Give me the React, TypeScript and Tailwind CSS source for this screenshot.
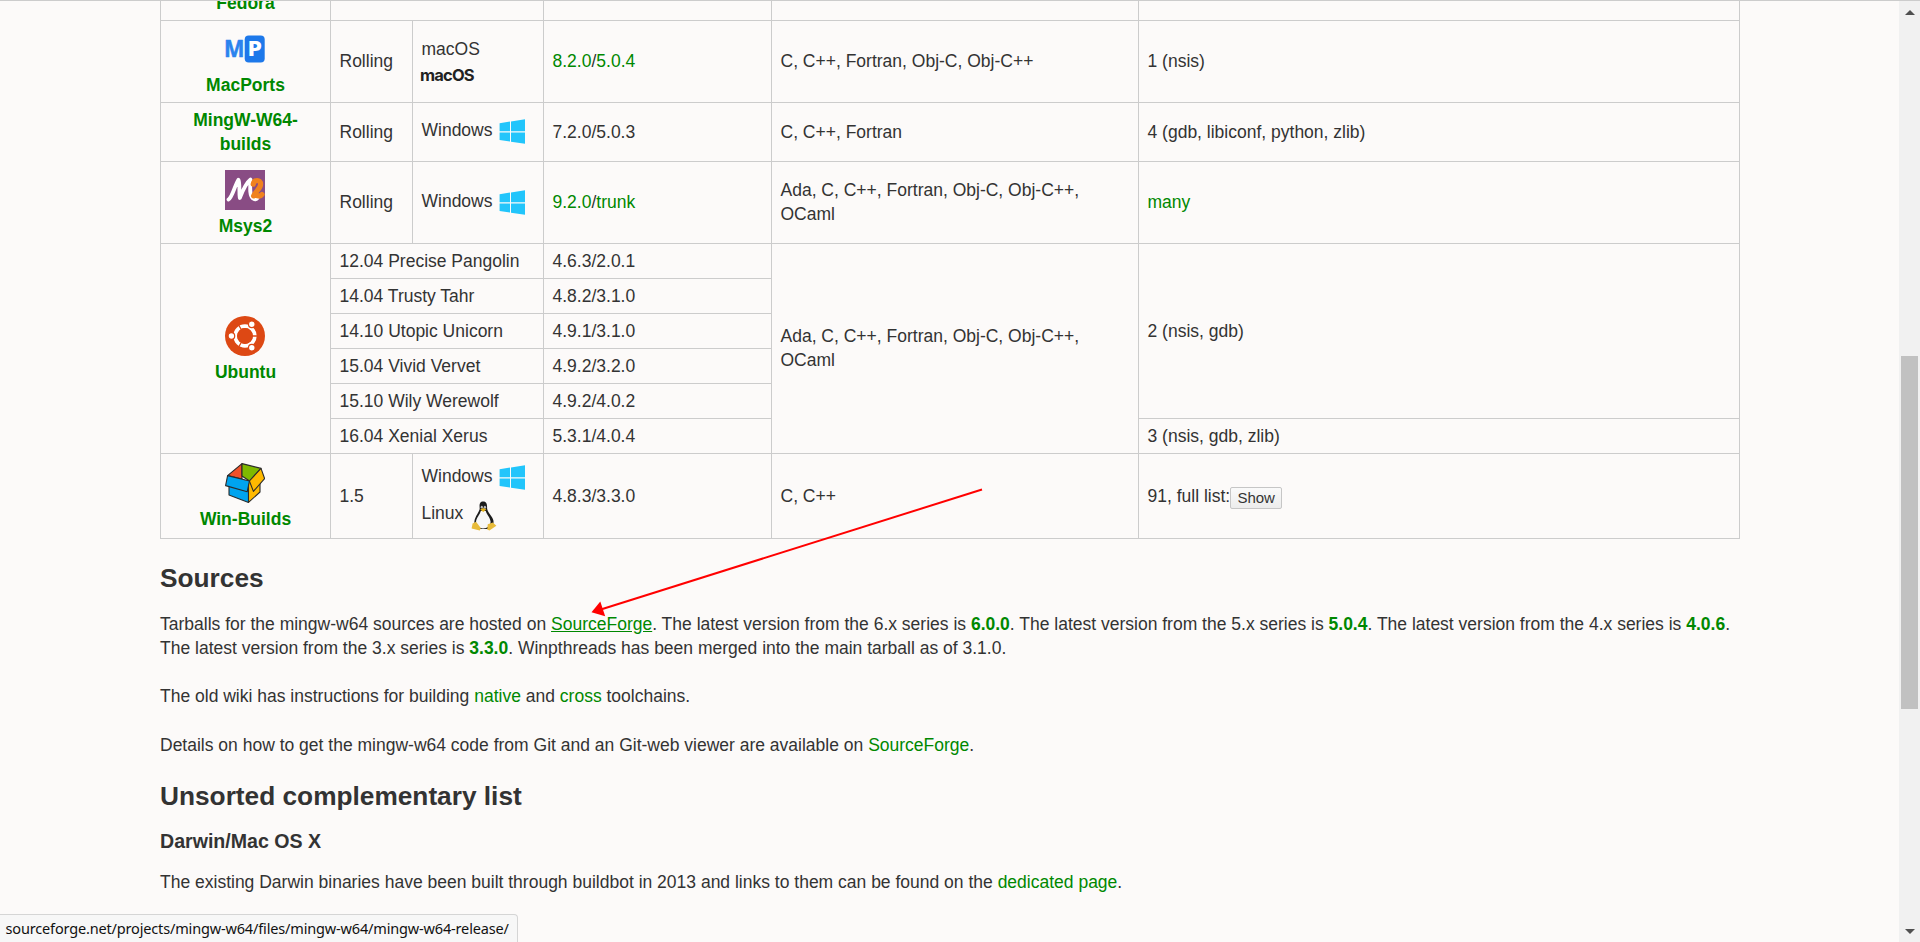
import type { ReactNode } from "react";

const cell = "flex flex-col justify-center border-r border-b border-[#cccccc] pb-px pl-[8.5px]";

function Cell({ className = "", children }: { className?: string; children?: ReactNode }) {
  return <div className={`${cell} ${className}`}>{children}</div>;
}

function NameCell({ className = "", icon, children }: { className?: string; icon?: ReactNode; children: ReactNode }) {
  return (
    <div className={`flex flex-col items-center justify-center border-r border-b border-[#cccccc] text-center font-bold ${className}`}>
      {icon && <div className="mt-[3px] mr-[2px] mb-1 h-10 w-10">{icon}</div>}
      <G>{children}</G>
    </div>
  );
}

function G({ className = "", children }: { className?: string; children: ReactNode }) {
  return <a className={`text-[#008800] ${className}`}>{children}</a>;
}

function MacPortsLogo() {
  return (
    <svg width="40" height="40" viewBox="0 0 40 40" className="block">
      <rect x="19.7" y="6.4" width="20" height="27" rx="4" fill="#1d78ea" />
      <text x="-1" y="28.2" fontFamily="Noto Sans, sans-serif" fontWeight="700" fontSize="22.5" textLength="20.5" lengthAdjust="spacingAndGlyphs" fill="#2b83ee" stroke="#2b83ee" strokeWidth="0.5">M</text>
      <text x="22.6" y="27.4" fontFamily="Noto Sans, sans-serif" fontWeight="800" fontSize="21" textLength="14.5" lengthAdjust="spacingAndGlyphs" fill="#ffffff">P</text>
    </svg>
  );
}

function MsysLogo() {
  return (
    <svg width="40" height="40" viewBox="0 0 40 40" className="block">
      <rect width="40" height="40" fill="#894c84" />
      <path d="M3.5 29.5C7 28 10 15 13.4 9.8C15.2 13 13.8 22 14.8 28C17.2 22 21 13 25.5 9.6C25.3 16 24 25 28 28.5C29.5 30 31.5 29.5 32.5 28" fill="none" stroke="#fff" strokeWidth="3.8" strokeLinejoin="round" strokeLinecap="round" />
      <path d="M28.2 14.2C29 9.6 35.5 9 35.6 14.2C35.6 19 30 21.5 28.6 26C32 23.5 34 28.5 37 24.5" fill="none" stroke="#f0821e" strokeWidth="5.2" strokeLinejoin="round" strokeLinecap="round" />
    </svg>
  );
}

function UbuntuLogo() {
  return (
    <svg width="40" height="40" viewBox="0 0 40 40" className="block">
      <circle cx="20" cy="20" r="20" fill="#dd4814" />
      <circle cx="20" cy="20" r="9.8" fill="none" stroke="#fff" strokeWidth="3.8" />
      <g stroke="#dd4814" strokeWidth="1.3">
        <path d="M20 20H33M20 20L13.5 8.74M20 20L13.5 31.26" />
      </g>
      <circle cx="20" cy="20" r="7.9" fill="#dd4814" />
      <g fill="#fff" stroke="#dd4814" strokeWidth="1.2">
        <circle cx="6.4" cy="20" r="3.3" />
        <circle cx="26.8" cy="8.3" r="3.3" />
        <circle cx="26.8" cy="31.7" r="3.3" />
      </g>
    </svg>
  );
}

function WinBuildsLogo() {
  return (
    <svg width="40" height="40" viewBox="0 0 40 40" className="block">
      <g stroke="#2b2b2b" strokeWidth="1.1" strokeLinejoin="round">
        <path d="M2.6 12.6L17 .6V16Z" fill="#f0512a" />
        <path d="M17 .6L36 5.4L24.5 18L17 13Z" fill="#7fb900" />
        <path d="M4 20L23.5 24V39.4L4 32Z" fill="#00a4ef" />
        <path d="M23.5 18L35 14V29L23.5 39.4Z" fill="#ffb900" />
        <path d="M2.6 12.6L24.4 18L22.2 28.8L.6 22.6Z" fill="#00a4ef" />
        <path d="M24.4 18L36 5.4L39.6 15.6L28.4 28.4Z" fill="#ffb900" />
      </g>
    </svg>
  );
}

function WindowsLogo() {
  return (
    <svg width="30" height="30" viewBox="0 0 30 30" className="block">
      <g fill="#22c5fb">
        <path d="M1.6 6.2L12 4.6V14.3H1.6Z" />
        <path d="M13 4.4L27 2.2V14.3H13Z" />
        <path d="M1.6 15.5H12V24.6L1.6 23Z" />
        <path d="M13 15.5H27V26.8L13 24.8Z" />
      </g>
    </svg>
  );
}

function Tux() {
  return (
    <svg width="26" height="30" viewBox="0 0 26 30" className="block">
      <path d="M12.2.6C8.6.6 8.3 3.6 8.7 7.4C8.8 10.6 4 15 3.4 20.6C3.2 24 4.6 26.5 7 28H18C21.5 27 23 23.5 22.4 19.6C21.7 15 16.4 11.5 16.1 7.4C16.2 3.6 15.7.6 12.2.6Z" fill="#1c1c1c" />
      <path d="M9.8 10C9 13.5 5 17 5 21.5C5.2 25.5 8.4 27.4 12 27.4C16.5 27.4 19.6 25 19.6 20.8C19.3 16.4 15.4 13.4 14.8 10Z" fill="#f7f7f7" />
      <ellipse cx="10.8" cy="6.2" rx="1.1" ry="1.4" fill="#bbb" />
      <ellipse cx="13.9" cy="6.2" rx="1.2" ry="1.5" fill="#bbb" />
      <path d="M9.2 8.4L12.3 7L15.3 8.4L12.2 11Z" fill="#e5b21a" />
      <path d="M1.6 22.4L5 20.8L9.8 27L8.8 29.4L.6 27.6Z" fill="#e8bb3a" />
      <path d="M16.8 23.2L21.8 21.6L25.4 24.8L18.4 29.5L16.2 28.5Z" fill="#e8bb3a" />
    </svg>
  );
}

function WindowsOs() {
  return (
    <div className="flex h-[30px] items-center">
      <span className="relative -top-[2px]">Windows</span>
      <span className="ml-[5px]"><WindowsLogo /></span>
    </div>
  );
}

const releases = [
  ["12.04 Precise Pangolin", "4.6.3/2.0.1"],
  ["14.04 Trusty Tahr", "4.8.2/3.1.0"],
  ["14.10 Utopic Unicorn", "4.9.1/3.1.0"],
  ["15.04 Vivid Vervet", "4.9.2/3.2.0"],
  ["15.10 Wily Werewolf", "4.9.2/4.0.2"],
  ["16.04 Xenial Xerus", "5.3.1/4.0.4"],
];

function Toolchains() {
  return (
    <div className="grid w-[1580px] grid-cols-[170px_82px_131px_228px_367px_601px] grid-rows-[20px_82px_59px_82px_repeat(6,35px)_85px] border-l border-[#cccccc]">
      <NameCell className="overflow-hidden"><span className="relative -top-[8px] block">Fedora</span></NameCell>
      <Cell className="col-span-2" />
      <Cell />
      <Cell />
      <Cell />

      <NameCell icon={<MacPortsLogo />}>MacPorts</NameCell>
      <Cell>Rolling</Cell>
      <Cell>
        <span>macOS</span>
        <span className="relative top-[2px] -ml-[1.5px] font-['Inter',sans-serif] text-[16.5px] font-bold tracking-[-0.8px] text-[#222222]">macOS</span>
      </Cell>
      <Cell><span><G>8.2.0</G>/<G>5.0.4</G></span></Cell>
      <Cell>C, C++, Fortran, Obj-C, Obj-C++</Cell>
      <Cell>1 (nsis)</Cell>

      <NameCell>MingW-W64-<br />builds</NameCell>
      <Cell>Rolling</Cell>
      <Cell className="pt-px"><WindowsOs /></Cell>
      <Cell>7.2.0/5.0.3</Cell>
      <Cell>C, C++, Fortran</Cell>
      <Cell>4 (gdb, libiconf, python, zlib)</Cell>

      <NameCell icon={<MsysLogo />}>Msys2</NameCell>
      <Cell>Rolling</Cell>
      <Cell className="pt-px"><WindowsOs /></Cell>
      <Cell><span><G>9.2.0</G>/<G>trunk</G></span></Cell>
      <Cell><span>Ada, C, C++, Fortran, Obj-C, Obj-C++,<br />OCaml</span></Cell>
      <Cell><G>many</G></Cell>

      <NameCell className="col-start-1 row-span-6 row-start-5" icon={<UbuntuLogo />}>Ubuntu</NameCell>
      <div className="col-span-3 col-start-2 row-span-6 row-start-5 grid grid-cols-[213px_228px] grid-rows-[repeat(6,35px)]">
        {releases.map(([name, version]) => [
          <Cell key={name} className="pt-px">{name}</Cell>,
          <Cell key={name + version} className="pt-px">{version}</Cell>,
        ])}
      </div>
      <Cell className="col-start-5 row-span-6 row-start-5"><span>Ada, C, C++, Fortran, Obj-C, Obj-C++,<br />OCaml</span></Cell>
      <Cell className="col-start-6 row-span-5 row-start-5 pt-px">2 (nsis, gdb)</Cell>
      <Cell className="col-start-6 row-start-10 pt-px">3 (nsis, gdb, zlib)</Cell>

      <NameCell className="pb-px" icon={<WinBuildsLogo />}>Win-Builds</NameCell>
      <Cell className="pt-px">1.5</Cell>
      <Cell className="pt-[3px]">
        <WindowsOs />
        <div className="mt-[6px] flex h-[32px] items-center">
          <span className="relative -top-[2px]">Linux</span>
          <span className="mt-px ml-[8px]"><Tux /></span>
        </div>
      </Cell>
      <Cell className="pt-px">4.8.3/3.3.0</Cell>
      <Cell className="pt-px">C, C++</Cell>
      <div className="flex items-center border-r border-b border-[#cccccc] pl-[8.5px]">
        <span>91, full list:</span>
        <button className="mt-[3px] h-[22px] w-[52px] rounded-[2px] border border-[#c6c6c6] bg-linear-to-b from-[#fafafa] to-[#ececec] text-[15px] leading-[20px] text-[#333333]">Show</button>
      </div>
    </div>
  );
}

export default function App() {
  return (
    <div className="relative flex h-[942px] w-[1920px] overflow-hidden border-t border-[#cccccc] bg-[#fcfaf9] font-['Liberation_Sans',Arial,sans-serif] text-[17.5px] leading-[24px] whitespace-nowrap text-[#333333]">
      <main className="flex-1 pl-[160px]">
        <Toolchains />
        <h2 className="mt-6 text-[26.25px] leading-[30px] font-bold">Sources</h2>
        <p className="mt-[19px]">
          Tarballs for the mingw-w64 sources are hosted on <G className="underline">SourceForge</G>. The latest version from the 6.x series is <G className="font-bold">6.0.0</G>. The latest version from the 5.x series is <G className="font-bold">5.0.4</G>. The latest version from the 4.x series is <G className="font-bold">4.0.6</G>.<br />
          The latest version from the 3.x series is <G className="font-bold">3.3.0</G>. Winpthreads has been merged into the main tarball as of 3.1.0.
        </p>
        <p className="mt-6">
          The old wiki has instructions for building <G>native</G> and <G>cross</G> toolchains.
        </p>
        <p className="mt-[25px]">
          Details on how to get the mingw-w64 code from Git and an Git-web viewer are available on <G>SourceForge</G>.
        </p>
        <h2 className="mt-6 text-[26.25px] leading-[30px] font-bold">Unsorted complementary list</h2>
        <h3 className="mt-[18px] text-[19.6px] leading-6 font-bold">Darwin/Mac OS X</h3>
        <p className="mt-[17px]">
          The existing Darwin binaries have been built through buildbot in 2013 and links to them can be found on the <G>dedicated page</G>.
        </p>
      </main>

      <aside className="flex w-[21px] flex-col items-center bg-[#f1f1f1]">
        <svg width="10" height="5" viewBox="0 0 10 5" className="mt-[9px] block"><path d="M0 5L5 0L10 5Z" fill="#505050" /></svg>
        <div className="mt-[341px] h-[353px] w-[17px] bg-[#c1c1c1]" />
        <svg width="10" height="5" viewBox="0 0 10 5" className="mt-[220px] block"><path d="M0 0L5 5L10 0Z" fill="#505050" /></svg>
      </aside>

      <svg className="absolute -top-px left-0" width="1000" height="640" viewBox="0 0 1000 640">
        <path d="M982 489.5L600 609.8" stroke="#ff0000" strokeWidth="2" />
        <path d="M591.5 612.3L600.3 601.5L605.2 616.3Z" fill="#ff0000" />
      </svg>

      <div className="absolute bottom-0 left-0 h-7 w-[518px] rounded-tr-[4px] border-t border-r border-[#d5d5d5] bg-[#f7f7f7] pl-[5.5px] font-['Noto_Sans',sans-serif] text-[14.5px] leading-[27px] tracking-[-0.16px] text-[#111111]">
        sourceforge.net/projects/mingw-w64/files/mingw-w64/mingw-w64-release/
      </div>
    </div>
  );
}
